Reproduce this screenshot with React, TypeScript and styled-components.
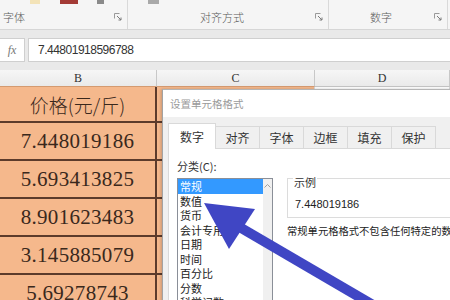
import React from 'react';
import styled, { createGlobalStyle } from 'styled-components';

const GlobalStyle = createGlobalStyle`
  html, body {
    margin: 0;
    padding: 0;
    background: #f3f3f3;
  }
  * {
    box-sizing: border-box;
  }
`;

const UI_FONT = `"Noto Sans CJK SC", "Liberation Sans", sans-serif`;

const Page = styled.div`
  position: relative;
  width: 450px;
  height: 300px;
  overflow: hidden;
  background: #f3f3f3;
  font-family: ${UI_FONT};
`;

/* ribbon */
const Ribbon = styled.div`
  display: flex;
  height: 30px;
  background: #f5f5f5;
  border-bottom: 1px solid #d6d6d6;
`;

const Group = styled.div<{ $w: number }>`
  width: ${(p) => p.$w}px;
  flex-shrink: 0;
  display: flex;
  flex-direction: column;
  justify-content: space-between;
  border-right: 1px solid #d9d9d9;
`;

const IconRow = styled.div`
  display: flex;
  height: 5px;
`;

const IconStub = styled.span<{ $x: number; $w: number; $c: string }>`
  margin-left: ${(p) => p.$x}px;
  width: ${(p) => p.$w}px;
  height: 4px;
  background: ${(p) => p.$c};
`;

const GroupFooter = styled.div<{ $pad: number }>`
  display: flex;
  align-items: center;
  height: 16px;
  margin-bottom: 4px;
  padding-left: ${(p) => p.$pad}px;
  padding-right: 5px;
`;

const GroupLabel = styled.span`
  flex: 1;
  font-size: 11px;
  font-weight: 300;
  color: #5a5a5a;
  line-height: 16px;
`;

const Launcher = styled.svg`
  width: 8px;
  height: 8px;
`;

const Band = styled.div`
  height: 8px;
  background: #e9e9e9;
`;

const FormulaBar = styled.div`
  display: flex;
  gap: 3px;
  height: 24px;
  background: #e9e9e9;
`;

const FxBox = styled.div`
  width: 25px;
  background: #fff;
  border: 1px solid #cfcfcf;
  border-left: none;
  display: flex;
  align-items: center;
  justify-content: center;
  font-family: "Liberation Serif", serif;
  font-style: italic;
  font-size: 12px;
  color: #777;
`;

const FormulaInput = styled.div`
  flex: 1;
  background: #fff;
  border: 1px solid #cfcfcf;
  border-right: none;
  padding-left: 9px;
  display: flex;
  align-items: center;
  font-family: "Liberation Sans", sans-serif;
  font-size: 12px;
  letter-spacing: -0.5px;
  color: #333;
`;

/* sheet */
const HeaderRow = styled.div`
  display: flex;
  height: 17px;
  background: linear-gradient(#f6f6f6, #e9e9e9);
`;

const ColHead = styled.div<{ $w?: number; $sel?: boolean }>`
  ${(p) => (p.$w ? `width: ${p.$w}px;` : 'flex: 1;')}
  flex-shrink: 0;
  border-right: 1px solid #c8c8c8;
  border-bottom: 1px solid ${(p) => (p.$sel ? '#d49a70' : '#c4c4c4')};
  display: flex;
  align-items: center;
  justify-content: center;
  font-family: "Liberation Serif", serif;
  font-size: 12px;
  color: #333;
`;

const Row = styled.div<{ $h: number }>`
  display: flex;
  height: ${(p) => p.$h}px;
`;

const Cell = styled.div<{ $w?: number; $fill?: boolean; $strong?: boolean }>`
  ${(p) => (p.$w ? `width: ${p.$w}px;` : 'flex: 1;')}
  flex-shrink: 0;
  background: ${(p) => (p.$fill ? '#f5b88c' : '#fff')};
  border-bottom: 2px solid ${(p) => (p.$fill ? '#5c3b2b' : '#dadada')};
  border-right: ${(p) => (p.$strong ? '2px solid #5c3b2b' : '1px solid #dadada')};
  display: flex;
  align-items: center;
  justify-content: center;
  color: #3a281c;
`;

const NumText = styled.span`
  font-family: "Liberation Serif", serif;
  font-size: 21px;
  letter-spacing: 0.3px;
`;

const HeadText = styled.span`
  font-family: ${UI_FONT};
  font-size: 19px;
  font-weight: 300;
`;

/* dialog */
const Dialog = styled.div`
  position: absolute;
  left: 162px;
  top: 89px;
  width: 300px;
  height: 220px;
  background: #f0f0f0;
  border-left: 1px solid #a3a3a3;
  border-top: 1px solid #b5b5b5;
  box-shadow: -1px 0 3px rgba(0, 0, 0, 0.2);
  display: flex;
  flex-direction: column;
`;

const TitleBar = styled.div`
  height: 27px;
  background: #fff;
  padding-left: 7px;
  line-height: 27px;
  font-size: 10.5px;
  color: #9a9a9a;
`;

const DialogBody = styled.div`
  flex: 1;
  padding: 6px 0 0 5px;
  display: flex;
  flex-direction: column;
`;

const TabList = styled.div`
  display: flex;
  align-items: flex-end;
  height: 25px;
`;

const Tab = styled.div<{ $active?: boolean }>`
  width: ${(p) => (p.$active ? 48 : 45)}px;
  height: ${(p) => (p.$active ? 26 : 22)}px;
  margin-left: -1px;
  margin-bottom: ${(p) => (p.$active ? -1 : 0)}px;
  background: ${(p) => (p.$active ? '#fff' : '#f0f0f0')};
  border: 1px solid #d9d9d9;
  border-bottom: none;
  display: flex;
  align-items: center;
  justify-content: center;
  font-size: 12px;
  color: #333;
  position: relative;
  z-index: ${(p) => (p.$active ? 1 : 0)};
  &:first-child {
    margin-left: 0;
  }
`;

const Panel = styled.div`
  flex: 1;
  background: #fff;
  border: 1px solid #d9d9d9;
  border-right: none;
  padding: 10px 0 0 8px;
  display: flex;
  overflow: hidden;
`;

const LeftCol = styled.div`
  width: 96px;
  flex-shrink: 0;
  display: flex;
  flex-direction: column;
`;

const FieldLabel = styled.div`
  font-size: 11px;
  line-height: 14px;
  color: #333;
  margin-bottom: 5px;
`;

const ListBox = styled.div`
  flex: 1;
  display: flex;
  border: 1px solid #8a8f98;
  border-bottom: none;
`;

const ListItems = styled.div`
  flex: 1;
  display: flex;
  flex-direction: column;
`;

const ListItem = styled.div<{ $sel?: boolean }>`
  height: 14.5px;
  line-height: 14.5px;
  padding-left: 2px;
  font-size: 11px;
  white-space: nowrap;
  color: ${(p) => (p.$sel ? '#fff' : '#222')};
  background: ${(p) => (p.$sel ? '#3399ff' : 'transparent')};
`;

const ScrollTrack = styled.div`
  width: 9px;
  background: #f0f0f0;
  display: flex;
  justify-content: center;
  padding-top: 4px;
`;

const RightCol = styled.div`
  flex: 1;
  min-width: 0;
  margin-left: 14px;
  padding-top: 19px;
  display: flex;
  flex-direction: column;
`;

const SampleBox = styled.div`
  height: 40px;
  border: 1px solid #dcdcdc;
  border-right: none;
  padding-left: 5px;
`;

const Legend = styled.div`
  width: fit-content;
  margin-top: -3px;
  padding: 0 1px;
  background: #fff;
  font-size: 11px;
  line-height: 13px;
  color: #333;
`;

const SampleValue = styled.div`
  margin-top: 9px;
  padding-left: 2px;
  font-family: "Liberation Sans", sans-serif;
  font-size: 11px;
  line-height: 13px;
  color: #222;
`;

const Desc = styled.div`
  margin-top: 6px;
  font-size: 10.3px;
  line-height: 13px;
  white-space: nowrap;
  color: #222;
`;

const ArrowLayer = styled.svg`
  position: absolute;
  left: 0;
  top: 0;
  width: 450px;
  height: 300px;
  pointer-events: none;
`;

const prices = ['7.448019186', '5.693413825', '8.901623483', '3.145885079', '5.69278743'];
const tabs = ['数字', '对齐', '字体', '边框', '填充', '保护'];
const categories = ['常规', '数值', '货币', '会计专用', '日期', '时间', '百分比', '分数', '科学记数'];

const LauncherIcon = () => (
  <Launcher viewBox="0 0 8 8">
    <path d="M0.5 0.5h5M0.5 0.5v5" stroke="#9a9a9a" strokeWidth="1" fill="none" />
    <path d="M3 3l4 4M7 4.5V7H4.5" stroke="#7a7a7a" strokeWidth="1" fill="none" />
  </Launcher>
);

const App = () => {
  return (
    <Page>
      <GlobalStyle />
      <Ribbon>
        <Group $w={128}>
          <IconRow>
            <IconStub $x={30} $w={10} $c="#f3e3b8" />
            <IconStub $x={20} $w={18} $c="#a33a35" />
            <IconStub $x={19} $w={7} $c="#8a8a8a" />
          </IconRow>
          <GroupFooter $pad={3}>
            <GroupLabel>字体</GroupLabel>
            <LauncherIcon />
          </GroupFooter>
        </Group>
        <Group $w={201}>
          <IconRow>
            <IconStub $x={20} $w={11} $c="#a9a9a9" />
          </IconRow>
          <GroupFooter $pad={72}>
            <GroupLabel>对齐方式</GroupLabel>
            <LauncherIcon />
          </GroupFooter>
        </Group>
        <Group $w={119}>
          <IconRow />
          <GroupFooter $pad={41}>
            <GroupLabel>数字</GroupLabel>
            <LauncherIcon />
          </GroupFooter>
        </Group>
      </Ribbon>
      <Band />
      <FormulaBar>
        <FxBox>fx</FxBox>
        <FormulaInput>7.44801918596788</FormulaInput>
      </FormulaBar>
      <Band />
      <HeaderRow>
        <ColHead $w={157} $sel>B</ColHead>
        <ColHead $w={158} $sel>C</ColHead>
        <ColHead>D</ColHead>
      </HeaderRow>
      <Row $h={36}>
        <Cell $w={157} $fill $strong>
          <HeadText>价格(元/斤)</HeadText>
        </Cell>
        <Cell $w={158} $fill />
        <Cell />
      </Row>
      {prices.map((p) => (
        <Row $h={38} key={p}>
          <Cell $w={157} $fill $strong>
            <NumText>{p}</NumText>
          </Cell>
          <Cell $w={158} $fill />
          <Cell />
        </Row>
      ))}

      <Dialog>
        <TitleBar>设置单元格格式</TitleBar>
        <DialogBody>
          <TabList>
            {tabs.map((t, i) => (
              <Tab key={t} $active={i === 0}>
                {t}
              </Tab>
            ))}
          </TabList>
          <Panel>
            <LeftCol>
              <FieldLabel>分类(C):</FieldLabel>
              <ListBox>
                <ListItems>
                  {categories.map((c, i) => (
                    <ListItem key={c} $sel={i === 0}>
                      {c}
                    </ListItem>
                  ))}
                </ListItems>
                <ScrollTrack>
                  <svg width="7" height="5" viewBox="0 0 7 5">
                    <path d="M0.5 4.5L3.5 1.5L6.5 4.5" stroke="#a0a0a0" strokeWidth="1" fill="none" />
                  </svg>
                </ScrollTrack>
              </ListBox>
            </LeftCol>
            <RightCol>
              <SampleBox>
                <Legend>示例</Legend>
                <SampleValue>7.448019186</SampleValue>
              </SampleBox>
              <Desc>常规单元格格式不包含任何特定的数字格式。</Desc>
            </RightCol>
          </Panel>
        </DialogBody>
      </Dialog>

      <ArrowLayer viewBox="0 0 450 300">
        <line x1="236" y1="225" x2="385" y2="312" stroke="#4046c4" strokeWidth="10" />
        <polygon points="204,203 255,209 229,249" fill="#4046c4" />
      </ArrowLayer>
    </Page>
  );
};

export default App;
